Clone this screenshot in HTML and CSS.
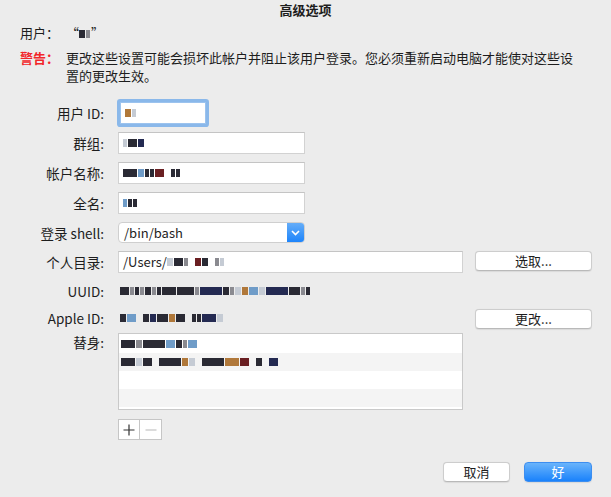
FILE: index.html
```html
<!DOCTYPE html>
<html lang="zh-CN">
<head>
  <meta charset="UTF-8">
  <title>高级选项</title>
  <link rel="stylesheet" href="styles.css">
</head>
<body>
  <div class="sheet">
    <div class="title">高级选项</div>

    <div class="info-row">
      <span class="info-label">用户：</span>
      <span class="info-text">“<span class="px w3 dk"></span><span class="px w2 md"></span>”</span>
    </div>
    <div class="info-row warn">
      <span class="info-label red">警告：</span>
      <span class="info-text">更改这些设置可能会损坏此帐户并阻止该用户登录。您必须重新启动电脑才能使对这些设置的更改生效。</span>
    </div>

    <div class="form">
      <label class="lbl">用户 ID:</label>
      <div class="field"><div class="input focus"><span class="px w3 br"></span><span class="px w2 lt"></span></div></div>
      <div></div>

      <label class="lbl">群组:</label>
      <div class="field"><div class="input short"><span class="px w2 lt"></span><span class="px w4 dk"></span><span class="px w3 nv"></span></div></div>
      <div></div>

      <label class="lbl">帐户名称:</label>
      <div class="field"><div class="input short"><span class="px w6 dk"></span><span class="px w3 bl"></span><span class="px w2 dk"></span><span class="px w2 dk"></span><span class="px w4 rd"></span><span class="gap"></span><span class="px w2 dk"></span><span class="px w2 dk"></span></div></div>
      <div></div>

      <label class="lbl">全名:</label>
      <div class="field"><div class="input short"><span class="px w2 bl"></span><span class="px w2 dk"></span><span class="px w2 dk"></span></div></div>
      <div></div>

      <label class="lbl">登录 shell:</label>
      <div class="field">
        <div class="popup">
          <span class="popup-value">/bin/bash</span>
          <span class="popup-arrow">
            <svg width="9" height="6" viewBox="0 0 9 6"><path d="M1 1 L4.5 4.5 L8 1" fill="none" stroke="#fff" stroke-width="1.6"/></svg>
          </span>
        </div>
      </div>
      <div></div>

      <label class="lbl">个人目录:</label>
      <div class="field"><div class="input">/Users/<span class="px w3 lt"></span><span class="px w4 dk"></span><span class="px w2 md"></span><span class="gap"></span><span class="px w3 rd"></span><span class="px w3 dk"></span><span class="gap"></span><span class="px w2 md"></span><span class="px w2 lt"></span></div></div>
      <button class="btn side">选取...</button>

      <label class="lbl">UUID:</label>
      <div class="value"><span class="px w4 dk"></span><span class="px w2 md"></span><span class="px w2 dk"></span><span class="px w2 md"></span><span class="px w3 dk"></span><span class="px w2 md"></span><span class="px w2 dk"></span><span class="px w6 dk"></span><span class="px w7 dk"></span><span class="px w2 md"></span><span class="px w8 nv"></span><span class="px w3 dk"></span><span class="px w2 md"></span><span class="px w3 lt"></span><span class="px w3 br"></span><span class="px w4 bl"></span><span class="px w3 lt"></span><span class="px w8 nv"></span><span class="px w5 dk"></span><span class="px w2 md"></span><span class="px w2 dk"></span></div>
      <div></div>

      <label class="lbl">Apple ID:</label>
      <div class="value"><span class="px w3 dk"></span><span class="px w4 bl"></span><span class="gap"></span><span class="px w3 dk"></span><span class="px w3 nv"></span><span class="px w5 dk"></span><span class="px w3 br"></span><span class="px w4 dk"></span><span class="gap"></span><span class="px w2 dk"></span><span class="px w2 dk"></span><span class="px w6 nv"></span><span class="px w3 lt"></span></div>
      <button class="btn side">更改...</button>

      <label class="lbl top">替身:</label>
      <div class="field">
        <div class="list">
          <div class="list-row"><span class="px w6 dk"></span><span class="px w3 md"></span><span class="px w8 dk"></span><span class="px w4 bl"></span><span class="px w3 dk"></span><span class="px w2 md"></span><span class="px w4 bl"></span></div>
          <div class="list-row alt"><span class="px w6 dk"></span><span class="px w3 lt"></span><span class="px w4 dk"></span><span class="gap"></span><span class="px w8 dk"></span><span class="px w3 br"></span><span class="px w3 lt"></span><span class="gap"></span><span class="px w8 dk"></span><span class="px w6 br"></span><span class="px w4 rd"></span><span class="gap"></span><span class="px w3 dk"></span><span class="gap"></span><span class="px w4 nv"></span></div>
          <div class="list-row"></div>
          <div class="list-row alt"></div>
        </div>
        <div class="seg">
          <span class="seg-btn">
            <svg width="12" height="12" viewBox="0 0 12 12"><path d="M6 0.5 V11.5 M0.5 6 H11.5" stroke="#333" stroke-width="1.2"/></svg>
          </span>
          <span class="seg-btn">
            <svg width="12" height="12" viewBox="0 0 12 12"><path d="M0.5 6 H11.5" stroke="#c4c4c4" stroke-width="1.2"/></svg>
          </span>
        </div>
      </div>
      <div></div>
    </div>

    <div class="footer">
      <button class="btn foot">取消</button>
      <button class="btn foot primary">好</button>
    </div>
  </div>
</body>
</html>
```

FILE: styles.css
```css
body {
  margin: 0;
  background-color: #ececec;
  font-family: 'Noto Sans CJK SC', 'Noto Sans', sans-serif;
  font-size: 13px;
  color: #1d1d1d;
}
.sheet {
  width: 611px;
  height: 497px;
  overflow: hidden;
}
.title {
  text-align: center;
  font-weight: bold;
  line-height: 20px;
  height: 22px;
}
.info-row {
  display: flex;
  padding-left: 20px;
  line-height: 18px;
  margin-top: 2px;
}
.info-row.warn {
  margin-top: 7px;
}
.info-label {
  width: 46px;
  flex-shrink: 0;
}
.info-label.red {
  color: #f2262a;
  font-weight: bold;
}
.info-text {
  width: 510px;
}
.form {
  display: grid;
  grid-template-columns: 88px 345px 117px;
  grid-template-rows: 22px 22px 22px 22px 21px 22px 20px 18px auto;
  column-gap: 12px;
  row-gap: 8px;
  padding-left: 18px;
  margin-top: 17px;
  align-items: center;
}
.lbl {
  text-align: right;
  padding-right: 2px;
  font-size: 13.5px;
  line-height: 20px;
  white-space: nowrap;
}
.lbl.top {
  align-self: start;
  line-height: 18px;
  margin-top: -2px;
}
.input {
  box-sizing: border-box;
  height: 22px;
  background: #fff;
  border: 1px solid #d2d2d2;
  border-top-color: #c4c4c4;
  padding: 0 4px;
  line-height: 20px;
  display: flex;
  align-items: center;
  white-space: nowrap;
  overflow: hidden;
}
.input.short {
  width: 187px;
}
.input.focus {
  width: 86px;
  margin-left: 2px;
  border-color: #9cc3ee;
  box-shadow: 0 0 0 3px #8ab8ea;
  border-radius: 1px;
}
.popup {
  box-sizing: border-box;
  width: 187px;
  height: 21px;
  display: flex;
  background: #fff;
  border: 1px solid #cfcfcf;
  border-radius: 4px;
  overflow: hidden;
}
.popup-value {
  flex: 1;
  padding-left: 5px;
  line-height: 19px;
}
.popup-arrow {
  width: 17px;
  background: linear-gradient(#65adf8, #1d84fb);
  display: flex;
  align-items: center;
  justify-content: center;
}
.value {
  display: flex;
  align-items: center;
  white-space: nowrap;
  padding-left: 2px;
  height: 100%;
}
.btn {
  font-family: inherit;
  font-size: 13px;
  color: #1d1d1d;
  background: #fff;
  border: 1px solid #cdcdcd;
  border-bottom-color: #b9b9b9;
  border-radius: 4px;
  padding: 0;
  height: 20px;
  line-height: 18px;
  box-shadow: 0 0.5px 1px rgba(0, 0, 0, 0.08);
}
.btn.side {
  width: 117px;
  align-self: start;
}
.list {
  box-sizing: border-box;
  height: 77px;
  margin-top: -2px;
  border: 1px solid #c9c9c9;
  background: #fff;
  padding-top: 1px;
}
.list-row {
  height: 18px;
  display: flex;
  align-items: center;
  padding-left: 2px;
}
.list-row.alt {
  background: #f4f4f4;
}
.seg {
  display: flex;
  margin-top: 9px;
}
.seg-btn {
  box-sizing: border-box;
  width: 22px;
  height: 21px;
  background: #fff;
  border: 1px solid #c6c6c6;
  display: flex;
  align-items: center;
  justify-content: center;
}
.seg-btn + .seg-btn {
  border-left: none;
}
.footer {
  display: flex;
  justify-content: flex-end;
  gap: 14px;
  padding-right: 19px;
  margin-top: 22px;
}
.btn.foot {
  width: 67px;
}
.btn.primary {
  background: linear-gradient(#6ab4fb, #1a82fb);
  border-color: #3d8ef0;
  color: #fff;
  width: 68px;
}
/* pixelated placeholder blocks */
.px {
  display: inline-block;
  height: 8px;
  margin-right: 1px;
  vertical-align: middle;
}
.gap { display: inline-block; width: 6px; }
.w2 { width: 4px; }
.w3 { width: 6px; }
.w4 { width: 9px; }
.w5 { width: 11px; }
.w6 { width: 14px; }
.w7 { width: 17px; }
.w8 { width: 22px; }
.dk { background: #2a2a34; }
.md { background: #8a8a90; }
.lt { background: #c5cbd4; }
.nv { background: #242a52; }
.bl { background: #6f9cc8; }
.br { background: #b0783a; }
.rd { background: #6a1f22; }
```
